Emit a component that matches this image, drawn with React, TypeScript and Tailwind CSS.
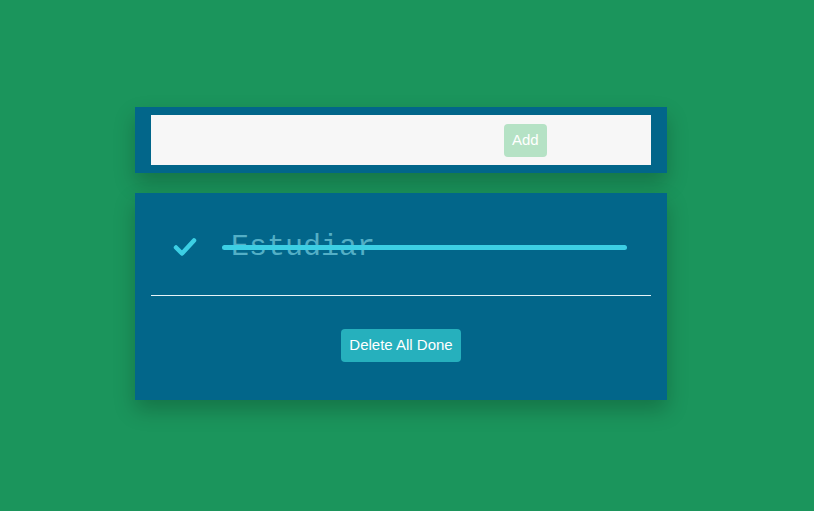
import React, { useState } from 'react';

export default function App() {
  const [text, setText] = useState('');

  return (
    <div className="w-full h-[511px] bg-[#1b955c] flex flex-col items-start pl-[135px] pt-[107px] gap-5" style={{ fontFamily: '"Liberation Sans", Arial, sans-serif' }}>
      {/* Add form */}
      <div className="w-[532px] h-[66px] bg-[#02668a] px-4 py-2 shadow-[0_10px_20px_rgba(0,0,0,0.22)]">
        <div className="h-full bg-[#f7f7f7] flex items-center">
          <input
            value={text}
            onChange={(e) => setText(e.target.value)}
            className="w-[353px] h-full bg-transparent outline-none"
          />
          <button className="h-[33px] px-[8px] rounded-[4px] bg-[#b5e2c5] text-white text-[15px]">
            Add
          </button>
        </div>
      </div>

      {/* List */}
      <div className="w-[532px] h-[207px] bg-[#02668a] px-4 shadow-[0_10px_20px_rgba(0,0,0,0.22)] flex flex-col">
        <div className="h-[103px] shrink-0 flex items-center border-b border-[#e6f4f8] pt-[6px]">
          <svg className="ml-[22px] w-[24px] h-[20px]" viewBox="0 0 24 20" fill="none">
            <path d="M3 10.5 L9 16.5 L21 3.5" stroke="#3ccfe4" strokeWidth="4.5" strokeLinecap="round" strokeLinejoin="round" />
          </svg>
          <div className="relative ml-[25px] w-[405px] h-[40px] flex items-center">
            <span className="pl-[9px] text-[30px] leading-none text-[#5cb8cd] opacity-90" style={{ fontFamily: '"Liberation Mono", "Courier New", monospace' }}>
              Estudiar
            </span>
            <div className="absolute left-0 right-0 top-[18px] h-[5px] rounded-full bg-[#3ccfe4]" />
          </div>
        </div>
        <div className="flex-1 flex justify-center pt-[33px]">
          <button className="h-[33px] px-[8px] rounded-[4px] bg-[#26b0bd] text-white text-[15px]">
            Delete All Done
          </button>
        </div>
      </div>
    </div>
  );
}
